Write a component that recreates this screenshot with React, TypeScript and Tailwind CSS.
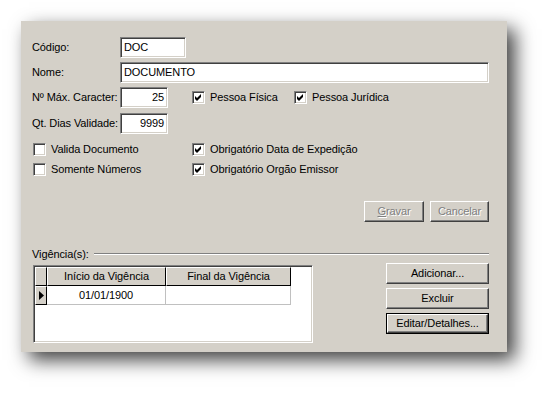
import type { ReactNode } from "react";

const sunken =
  "border border-t-[#808080] border-l-[#808080] border-b-white border-r-white shadow-[inset_1px_1px_0_#404040,inset_-1px_-1px_0_#d4d0c8]";
const raised =
  "border border-t-white border-l-white border-b-[#404040] border-r-[#404040] shadow-[inset_-1px_-1px_0_#808080]";

function Field({ value, className = "", right = false }: { value: string; className?: string; right?: boolean }) {
  return (
    <div className={`flex h-[21px] items-center bg-white px-[3px] text-black ${sunken} ${right ? "justify-end" : ""} ${className}`}>
      {value}
    </div>
  );
}

function Check({ checked, label, className = "" }: { checked: boolean; label: string; className?: string }) {
  return (
    <div className={`flex items-center gap-[5px] ${className}`}>
      <div className={`flex h-[13px] w-[13px] items-center justify-center bg-white ${sunken}`}>
        {checked && (
          <svg width="7" height="7" viewBox="0 0 7 7">
            <path d="M0 2 L2 4 L6 0 L6 3 L2 7 L0 5 Z" fill="#000" />
          </svg>
        )}
      </div>
      <span>{label}</span>
    </div>
  );
}

function Button({ children, className = "", disabled = false, isDefault = false }: { children: ReactNode; className?: string; disabled?: boolean; isDefault?: boolean }) {
  const face = (
    <div
      className={`flex h-full w-full items-center justify-center bg-[#d4d0c8] ${raised} ${
        disabled ? "text-[#808080] [text-shadow:1px_1px_0_#fff]" : "text-black"
      }`}
    >
      {children}
    </div>
  );
  if (isDefault) return <div className={`h-[21px] border border-black ${className}`}>{face}</div>;
  return <div className={`h-[21px] ${className}`}>{face}</div>;
}

function Label({ children }: { children: ReactNode }) {
  return <span className="w-[88px] shrink-0">{children}</span>;
}

export default function App() {
  return (
    <div className="h-[395px] w-[550px] bg-white pl-[21px] pt-[21px] font-['Liberation_Sans',Arial,sans-serif] text-[11px] leading-none tracking-[-0.1px] text-black">
      <div className="flex h-[331px] w-[486px] flex-col bg-[#d4d0c8] pl-[11px] pr-[18px] pt-[16px] shadow-[8px_8px_18px_rgba(0,0,0,0.75)]">
        <div className="flex h-[21px] items-center">
          <Label>Código:</Label>
          <Field value="DOC" className="w-[66px]" />
        </div>
        <div className="mt-[4px] flex h-[21px] items-center">
          <Label>Nome:</Label>
          <Field value="DOCUMENTO" className="flex-1" />
        </div>
        <div className="mt-[4px] flex h-[21px] items-center">
          <Label>Nº Máx. Caracter:</Label>
          <Field value="25" right className="w-[48px]" />
          <Check checked label="Pessoa Física" className="ml-[24px] w-[102px]" />
          <Check checked label="Pessoa Jurídica" />
        </div>
        <div className="mt-[5px] flex h-[21px] items-center">
          <Label>Qt. Dias Validade:</Label>
          <Field value="9999" right className="w-[48px]" />
        </div>
        <div className="mt-[5px] flex h-[20px] items-center">
          <Check checked={false} label="Valida Documento" className="ml-[1px] w-[159px]" />
          <Check checked label="Obrigatório Data de Expedição" />
        </div>
        <div className="flex h-[20px] items-center">
          <Check checked={false} label="Somente Números" className="ml-[1px] w-[159px]" />
          <Check checked label="Obrigatório Orgão Emissor" />
        </div>
        <div className="mt-[22px] flex justify-end gap-[6px]">
          <Button disabled className="w-[60px]">
            <span>
              <span className="underline">G</span>ravar
            </span>
          </Button>
          <Button disabled className="w-[59px]">
            Cancelar
          </Button>
        </div>
        <div className="mt-[25px] flex h-[14px] items-center">
          <span>Vigência(s):</span>
          <div className="ml-[5px] h-[2px] flex-1 border-t border-b border-t-[#808080] border-b-white" />
        </div>
        <div className="mt-[2px] flex justify-between">
          <div className={`ml-[1px] mt-[2px] flex h-[78px] w-[280px] flex-col bg-white ${sunken}`}>
            <div className="ml-[1px] mt-[1px] flex h-[19px]">
              <div className="w-[12px] border border-t-white border-l-white border-b-black border-r-black bg-[#d4d0c8]" />
              <div className="flex w-[119px] items-center justify-center border border-t-white border-l-white border-b-black border-r-black bg-[#d4d0c8]">
                Início da Vigência
              </div>
              <div className="flex w-[125px] items-center justify-center border border-t-white border-l-white border-b-black border-r-black bg-[#d4d0c8]">
                Final da Vigência
              </div>
            </div>
            <div className="ml-[1px] flex h-[19px]">
              <div className="flex w-[12px] items-center justify-center border border-t-white border-l-white border-b-black border-r-black bg-[#d4d0c8]">
                <svg width="5" height="9" viewBox="0 0 5 9">
                  <path d="M0 0 L5 4.5 L0 9 Z" fill="#000" />
                </svg>
              </div>
              <div className="flex w-[119px] items-center justify-center border-r border-b border-[#c0c0c0]">01/01/1900</div>
              <div className="w-[125px] border-r border-b border-[#c0c0c0]" />
            </div>
          </div>
          <div className="flex w-[103px] flex-col gap-[4px]">
            <Button>Adicionar...</Button>
            <Button>Excluir</Button>
            <Button isDefault>Editar/Detalhes...</Button>
          </div>
        </div>
      </div>
    </div>
  );
}
